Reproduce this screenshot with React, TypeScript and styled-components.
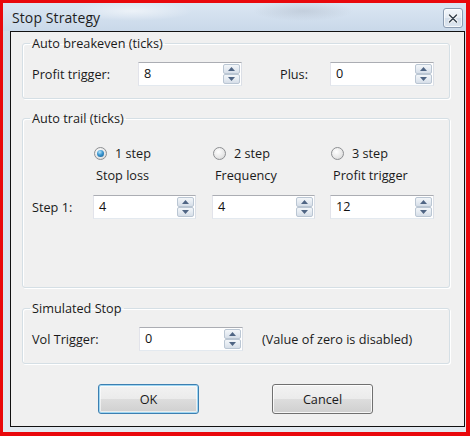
import React from "react";
import styled, { createGlobalStyle } from "styled-components";

const FS = "12.7px";

const GlobalStyle = createGlobalStyle`
  html, body { margin: 0; padding: 0; background: #e9080c; }
  body { font-family: "Open Sans", "Noto Sans", sans-serif; color: #1a1a1a; }
  * { box-sizing: border-box; }
`;

const Page = styled.div`
  width: 470px;
  height: 436px;
  padding: 3px 4px 4px 3px;
  background: #e9080c;
`;

const Window = styled.div`
  width: 463px;
  height: 429px;
  display: flex;
  flex-direction: column;
  background: linear-gradient(to bottom, #d6e2ef 0%, #cfdbe8 8%, #d9e3ee 60%, #e3e9f0 100%);
`;

const TitleBar = styled.div`
  height: 28px;
  display: flex;
  align-items: center;
  justify-content: space-between;
  padding: 0 3px 0 9px;
  background:
    radial-gradient(ellipse 60px 10px at 130px 8px, rgba(255,255,255,0.55), transparent),
    radial-gradient(ellipse 50px 10px at 300px 8px, rgba(160,170,185,0.35), transparent),
    linear-gradient(to bottom, #dbe6f3 0%, #c9d8e9 100%);
`;

const Title = styled.span`
  font-size: 14px;
  color: #1e1e1e;
  letter-spacing: 0.1px;
`;

const CloseButton = styled.div`
  width: 20px;
  height: 20px;
  align-self: flex-start;
  margin-top: 5px;
  border: 1px solid #8c9cb1;
  border-radius: 3px;
  background: linear-gradient(to bottom, #f4f7fb 0%, #e3eaf3 50%, #d3dde9 51%, #dde6f0 100%);
  display: flex;
  align-items: center;
  justify-content: center;
  box-shadow: inset 0 0 0 1px rgba(255,255,255,0.7);
`;

const FrameBody = styled.div`
  flex: 1;
  display: flex;
  padding: 0 1px 5px 7px;
`;

const Client = styled.div`
  flex: 1;
  display: flex;
  flex-direction: column;
  border: 1px solid #111;
  background: #f0f0f0;
  padding: 3px 14px 0 11px;
`;

const Group = styled.fieldset<{ $pt: number; $pb: number; $mt?: number }>`
  margin: ${(p) => p.$mt ?? 0}px 0 0 0;
  padding: ${(p) => p.$pt}px 9px ${(p) => p.$pb}px 9px;
  border: 1px solid #d5dfe5;
  border-radius: 3px;
  box-shadow: inset 1px 1px 0 #fff, 1px 1px 0 #fff;
  min-width: 0;
`;

const Legend = styled.legend`
  font-size: ${FS};
  line-height: 16px;
  padding: 0 2px;
  margin-left: -2px;
  color: #1a1a1a;
`;

const BreakevenRow = styled.div`
  display: grid;
  grid-template-columns: 106px 104px 38px 50px 104px;
  align-items: center;
  height: 24px;
`;

const Label = styled.span`
  font-size: ${FS};
  line-height: 16px;
  color: #1a1a1a;
  white-space: nowrap;
`;

const TrailGrid = styled.div`
  display: grid;
  grid-template-columns: 61px 119px 118px 104px;
  grid-template-rows: 16px 22px 36px;
  align-items: end;
  margin-top: 19px;
`;

const StepLabel = styled(Label)`
  align-self: end;
  line-height: 24px;
`;

const RadioOption = styled.label`
  display: flex;
  align-items: center;
  gap: 8px;
  padding-left: 1px;
  font-size: ${FS};
  line-height: 16px;
`;

const RadioCircle = styled.span`
  width: 13px;
  height: 13px;
  border-radius: 50%;
  border: 1px solid #8d8f92;
  background: radial-gradient(circle at 40% 35%, #ffffff 0%, #e6e6e6 60%, #cfcfcf 100%);
  display: flex;
  align-items: center;
  justify-content: center;
  flex-shrink: 0;
`;

const RadioDot = styled.span`
  width: 7px;
  height: 7px;
  border-radius: 50%;
  background: radial-gradient(circle at 40% 30%, #b8e6fb 0%, #3b95cf 45%, #0f5a8f 100%);
`;

const ColumnLabel = styled.span`
  font-size: ${FS};
  line-height: 16px;
  padding-left: 3px;
  white-space: nowrap;
`;

const SpinBox = styled.div<{ $w: number }>`
  width: ${(p) => p.$w}px;
  height: 24px;
  display: flex;
  align-items: stretch;
  background: #fff;
  border: 1px solid;
  border-color: #abadb3 #dbdfe6 #e3e9ef #e2e3ea;
  padding: 1px;
`;

const SpinValue = styled.span`
  flex: 1;
  padding-left: 4px;
  font-size: ${FS};
  line-height: 19px;
  color: #111;
`;

const SpinButtons = styled.div`
  width: 17px;
  display: flex;
  flex-direction: column;
`;

const SpinButton = styled.div`
  flex: 1;
  display: flex;
  align-items: center;
  justify-content: center;
  border: 1px solid #bac6d3;
  border-radius: 2px;
  background: linear-gradient(to bottom, #f3f6f9 0%, #e4eaf1 55%, #d6dee8 100%);
`;

const VolRow = styled.div`
  display: grid;
  grid-template-columns: 107px 104px auto;
  align-items: center;
  height: 24px;
`;

const Note = styled.span`
  font-size: ${FS};
  line-height: 16px;
  padding-left: 19px;
  white-space: nowrap;
`;

const ButtonRow = styled.div`
  display: flex;
  gap: 73px;
  padding-left: 76px;
  margin-top: 20px;
`;

const PushButton = styled.button<{ $default?: boolean }>`
  width: 101px;
  height: 30px;
  font-family: inherit;
  font-size: ${FS};
  color: #1a1a1a;
  border-radius: 3px;
  border: 1px solid ${(p) => (p.$default ? "#3c7fb1" : "#707070")};
  background: linear-gradient(to bottom, #f2f2f2 0%, #ebebeb 49%, #dddddd 50%, #cfcfcf 100%);
  box-shadow: ${(p) =>
    p.$default
      ? "inset 0 0 0 1px #9fd6f2, inset 0 0 0 2px rgba(255,255,255,0.6)"
      : "inset 0 0 0 1px rgba(255,255,255,0.8)"};
  padding: 0;
`;

const Arrow: React.FC<{ up?: boolean }> = ({ up }) => (
  <svg width="7" height="4" viewBox="0 0 7 4">
    <path d={up ? "M0 4 L3.5 0 L7 4 Z" : "M0 0 L3.5 4 L7 0 Z"} fill="#4f6584" />
  </svg>
);

const Spin: React.FC<{ value: string; w?: number }> = ({ value, w = 104 }) => (
  <SpinBox $w={w}>
    <SpinValue>{value}</SpinValue>
    <SpinButtons>
      <SpinButton>
        <Arrow up />
      </SpinButton>
      <SpinButton>
        <Arrow />
      </SpinButton>
    </SpinButtons>
  </SpinBox>
);

const Radio: React.FC<{ label: string; checked?: boolean }> = ({ label, checked }) => (
  <RadioOption>
    <RadioCircle>{checked && <RadioDot />}</RadioCircle>
    {label}
  </RadioOption>
);

export default function App() {
  return (
    <>
      <GlobalStyle />
      <Page>
        <Window>
          <TitleBar>
            <Title>Stop Strategy</Title>
            <CloseButton>
              <svg width="10" height="9" viewBox="0 0 10 9">
                <path d="M1.5 1 L8.5 8 M8.5 1 L1.5 8" stroke="#fff" strokeWidth="3.4" strokeLinecap="round" />
                <path d="M1.5 1 L8.5 8 M8.5 1 L1.5 8" stroke="#3a4552" strokeWidth="1.6" strokeLinecap="round" />
              </svg>
            </CloseButton>
          </TitleBar>
          <FrameBody>
            <Client>
              <Group $pt={11} $pb={12}>
                <Legend>Auto breakeven (ticks)</Legend>
                <BreakevenRow>
                  <Label>Profit trigger:</Label>
                  <Spin value="8" />
                  <span />
                  <Label>Plus:</Label>
                  <Spin value="0" />
                </BreakevenRow>
              </Group>

              <Group $pt={0} $pb={68} $mt={11}>
                <Legend>Auto trail (ticks)</Legend>
                <TrailGrid>
                  <span />
                  <Radio label="1 step" checked />
                  <Radio label="2 step" />
                  <Radio label="3 step" />
                  <span />
                  <ColumnLabel>Stop loss</ColumnLabel>
                  <ColumnLabel>Frequency</ColumnLabel>
                  <ColumnLabel>Profit trigger</ColumnLabel>
                  <StepLabel>Step 1:</StepLabel>
                  <Spin value="4" w={103} />
                  <Spin value="4" w={103} />
                  <Spin value="12" w={104} />
                </TrailGrid>
              </Group>

              <Group $pt={11} $pb={12} $mt={12}>
                <Legend>Simulated Stop</Legend>
                <VolRow>
                  <Label>Vol Trigger:</Label>
                  <Spin value="0" w={104} />
                  <Note>(Value of zero is disabled)</Note>
                </VolRow>
              </Group>

              <ButtonRow>
                <PushButton $default>OK</PushButton>
                <PushButton>Cancel</PushButton>
              </ButtonRow>
            </Client>
          </FrameBody>
        </Window>
      </Page>
    </>
  );
}
